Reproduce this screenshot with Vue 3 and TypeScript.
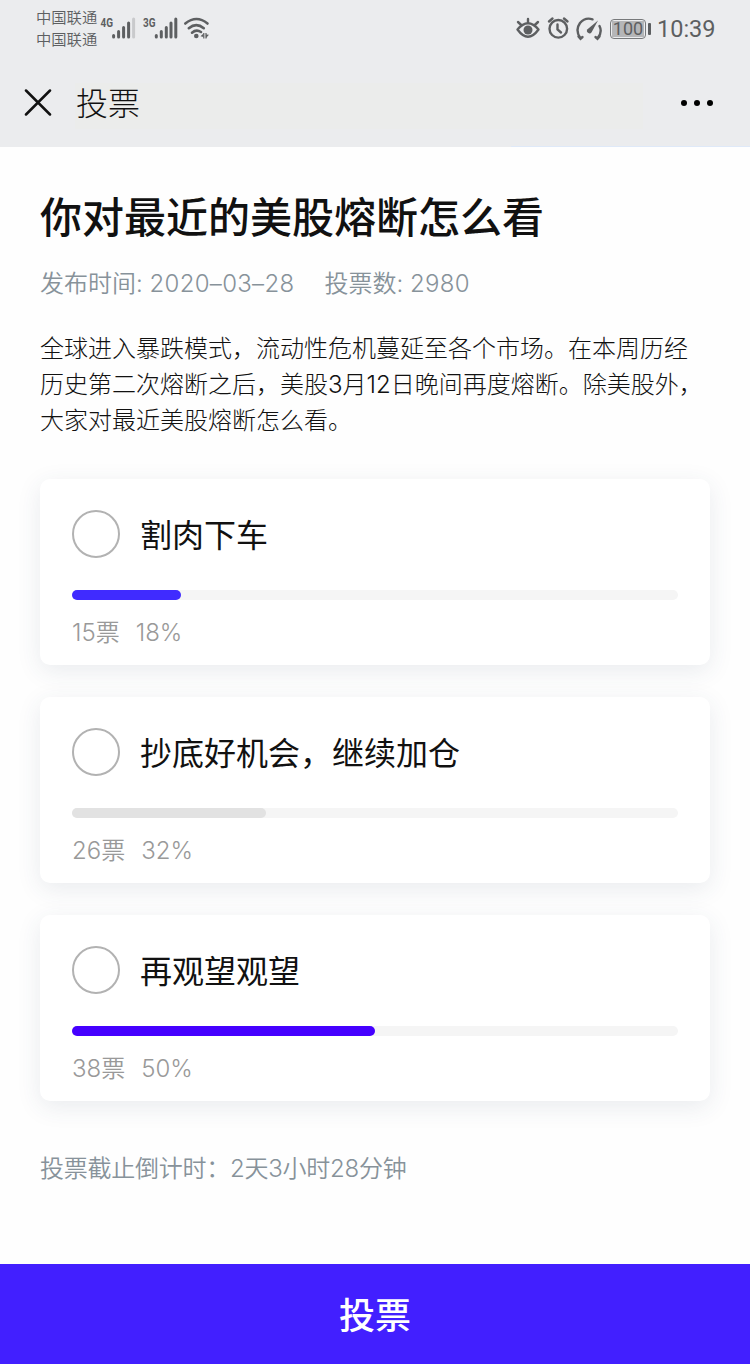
<script setup lang="ts">
interface Option {
  label: string
  votes: number
  percent: number
  color: string
}

const options: Option[] = [
  { label: '割肉下车', votes: 15, percent: 18, color: '#402bff' },
  { label: '抄底好机会，继续加仓', votes: 26, percent: 32, color: '#e2e2e2' },
  { label: '再观望观望', votes: 38, percent: 50, color: '#4500ff' },
]

const lines: string[] = [
  '全球进入暴跌模式，流动性危机蔓延至各个市场。在本周历经',
  '历史第二次熔断之后，美股3月12日晚间再度熔断。除美股外，',
  '大家对最近美股熔断怎么看。',
]
</script>

<template>
  <div class="page">
    <header class="top">
      <div class="status">
        <div class="carriers">
          <span>中国联通</span>
          <span>中国联通</span>
        </div>
        <svg class="signals" width="114" height="30" viewBox="0 0 114 30">
          <g font-family="Roboto, sans-serif" font-size="13" font-weight="700" fill="#5d5f61">
            <text x="1.500" y="16.500" textLength="12.500" lengthAdjust="spacingAndGlyphs">4G</text>
            <text x="44" y="16.500" textLength="12.500" lengthAdjust="spacingAndGlyphs">3G</text>
          </g>
          <g stroke="#5d5f61" stroke-width="3" stroke-linecap="round" fill="none">
            <path d="M14.600 27V25.500M19.600 27V21.500M24.600 27V17.500M29.600 27V13" />
            <path stroke="#c9cacc" d="M34.600 27V9" />
            <path d="M57.300 27V25.500M62.300 27V21.500M67.300 27V17.500M72 27V13M76.800 27V9" />
          </g>
          <g stroke="#5d5f61" stroke-width="2.600" stroke-linecap="round" fill="none">
            <path d="M86.300 13.500Q97.500 4.500 108.500 13.500" />
            <path d="M89.800 18.200Q97.300 12 104.800 18.200" />
            <path d="M93 22.700Q97.300 19 102 22" />
          </g>
          <circle cx="97.300" cy="26" r="2.300" fill="#5d5f61" />
          <path d="M104.800 23V28.500M107 23V28.500" stroke="#5d5f61" stroke-width="1.200" />
          <path d="M101.500 26.300L104.500 23.500V27ZM107 28L110 24.800L107 24.500Z" fill="#5d5f61" />
        </svg>
        <svg class="indicators" width="88" height="28" viewBox="0 0 88 28" fill="none" stroke="#5d5f61" stroke-width="2.400" stroke-linecap="round">
          <path d="M2.500 16.500Q13 4 23.500 16.500Q13 31 2.500 16.500Z" stroke-linejoin="round" />
          <circle cx="13" cy="17" r="4.500" fill="#5d5f61" stroke="none" />
          <path d="M13 9V6M6.200 12L3 9M19.800 12L23 9" />
          <circle cx="43.300" cy="15.800" r="8.800" />
          <path d="M42.500 11.500V16.500L46 19.500M34 8.500L37.500 5.500M49 5.500L52.500 8.500" />
          <path d="M65 24.500Q60 17 65 10Q70 4 77.500 6.300M84.500 13Q87.500 19 83 24.500" />
          <path d="M63.500 23.500L65.500 25.800L67.500 24M80.500 24L82.500 25.800L84.500 23.500" />
          <path d="M83 7.500L76.600 19.300A2.500 2.500 0 1 1 72.500 16.200Z" fill="#5d5f61" stroke="none" />
        </svg>
        <div class="battery"><span>100</span></div>
        <i class="cap"></i>
        <span class="clock">10:39</span>
      </div>
      <nav class="nav">
        <svg width="28" height="28" viewBox="0 0 28 28" stroke="#111" stroke-width="2.500" stroke-linecap="round">
          <path d="M2 1.500L26 25.500M26 1.500L2 25.500" />
        </svg>
        <span class="nav-title">投票</span>
        <div class="more"><i></i><i></i><i></i></div>
      </nav>
    </header>

    <main class="content">
      <h1>你对最近的美股熔断怎么看</h1>
      <div class="meta">
        <span>发布时间: <span class="number">2020–03–28</span></span>
        <span>投票数: <span class="number">2980</span></span>
      </div>
      <div class="description">
        <div v-for="line in lines" :key="line">{{ line }}</div>
      </div>
      <section class="options">
        <article v-for="option in options" :key="option.label" class="card">
          <div class="choice">
            <span class="radio"></span>
            <span class="label">{{ option.label }}</span>
          </div>
          <div class="track">
            <div class="fill" :style="{ width: option.percent + '%', background: option.color }"></div>
          </div>
          <div class="result">
            <span>{{ option.votes }}票</span>
            <span>{{ option.percent }}%</span>
          </div>
        </article>
      </section>
      <div class="countdown">投票截止倒计时：2天3小时28分钟</div>
    </main>
    <button class="submit" type="button">投票</button>
  </div>
</template>

<style>
body {
  margin: 0;
  background: #fefefe;
}
</style>

<style scoped>
.page {
  width: 750px;
  height: 1364px;
  display: flex;
  flex-direction: column;
  overflow: hidden;
  background: #fefefe;
  color: #111;
  font-family: Inter, "Noto Sans CJK SC", sans-serif;
  font-weight: 300;
  white-space: nowrap;
}
.top {
  height: 147px;
  background:
    linear-gradient(#dfe9f8, #dfe9f8) 511px 146px / 239px 1px no-repeat,
    linear-gradient(#ebeceb, #ebeceb) 75px 83px / 568px 46px no-repeat,
    #ebecee;
}
.status {
  height: 58px;
  display: flex;
  align-items: flex-start;
  color: #5d5f61;
}
.carriers {
  width: 62px;
  margin: 7px 0 0 36px;
  display: flex;
  flex-direction: column;
  font-size: 15.3px;
  font-weight: 350;
  line-height: 22px;
}
.signals {
  margin: 10px 0 0 1px;
}
.indicators {
  margin: 13px 0 0 302px;
}
.battery {
  box-sizing: border-box;
  width: 36px;
  height: 20px;
  margin: 19px 0 0 7px;
  padding: 1px;
  border: 1.5px solid #77797b;
  border-radius: 4px;
}
.battery span {
  display: block;
  height: 16px;
  background: #b5b6b8;
  font-family: Roboto, sans-serif;
  font-weight: 400;
  font-size: 18px;
  line-height: 16px;
  text-align: center;
}
.cap {
  width: 3px;
  height: 12px;
  margin: 23px 0 0 2px;
  border-radius: 1px;
  background: #5d5f61;
}
.clock {
  margin: 13px 0 0 6px;
  font-family: Roboto, sans-serif;
  font-weight: 400;
  font-size: 23.500px;
  line-height: 32px;
}
.nav {
  height: 89px;
  padding: 0 37px 0 24px;
  display: flex;
  align-items: center;
}
.nav-title {
  margin-left: 24px;
  padding-top: 2px;
  font-size: 32px;
  line-height: 44px;
}
.more {
  margin-left: auto;
  display: flex;
  gap: 7px;
}
.more i {
  width: 6px;
  height: 6px;
  border-radius: 50%;
  background: #000;
}
.content {
  flex: 1;
  padding: 0 40px;
}
h1 {
  margin: 41px 0 0;
  font-size: 42px;
  font-weight: 500;
  line-height: 60px;
}
.meta {
  margin-top: 19px;
  display: flex;
  gap: 30px;
  color: #87929a;
  font-size: 24px;
  font-weight: 350;
  line-height: 34px;
}
.number {
  letter-spacing: 0.300px;
}
.description {
  margin-top: 30px;
  font-size: 24px;
  line-height: 36px;
}
.options {
  margin-top: 40px;
  display: flex;
  flex-direction: column;
  gap: 32px;
}
.card {
  box-sizing: border-box;
  height: 186px;
  padding: 31px 32px 0;
  border-radius: 10px;
  background: #fff;
  box-shadow: 0 6px 24px rgba(50, 65, 95, 0.1);
}
.choice {
  display: flex;
  align-items: center;
  gap: 20px;
}
.radio {
  box-sizing: border-box;
  width: 48px;
  height: 48px;
  border: 2px solid #b2b2b2;
  border-radius: 50%;
}
.label {
  height: 48px;
  padding-top: 4px;
  box-sizing: border-box;
  font-size: 32px;
  font-weight: 400;
  line-height: 44px;
}
.track {
  height: 10px;
  margin-top: 32px;
  border-radius: 5px;
  background: #f5f5f5;
}
.fill {
  height: 100%;
  border-radius: 5px;
}
.result {
  margin-top: 16px;
  display: flex;
  gap: 16px;
  color: #999;
  font-size: 24px;
  font-weight: 350;
  line-height: 34px;
}
.countdown {
  margin-top: 50px;
  color: #87929a;
  font-size: 24px;
  font-weight: 350;
  letter-spacing: -0.250px;
  line-height: 35px;
}
.submit {
  height: 100px;
  padding: 4px 0 0;
  border: 0;
  background: #421fff;
  color: #fff;
  font-family: Inter, "Noto Sans CJK SC", sans-serif;
  font-size: 36px;
  font-weight: 500;
  line-height: 52px;
}
</style>
